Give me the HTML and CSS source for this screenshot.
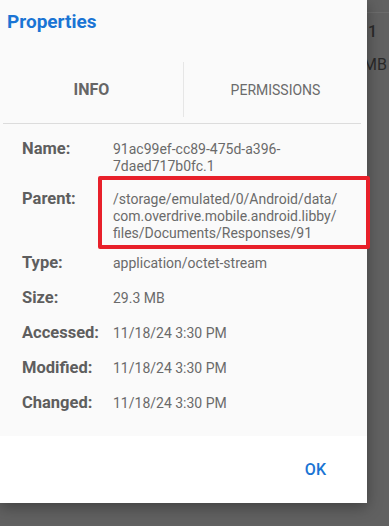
FILE: index.html
```html
<!DOCTYPE html>
<html lang="en">
<head>
    <meta charset="UTF-8">
    <meta name="viewport" content="width=device-width, initial-scale=1.0">
    <title>Properties</title>
    <link rel="stylesheet" href="styles.css">
</head>
<body>
    <div class="app">
        <div class="topbar"></div>
        <div class="file-name">b0fc.1</div>
        <div class="file-size">29.3 MB</div>
    </div>

    <div class="dialog">
        <div class="title">Properties</div>
        <div class="tabs">
            <div class="tab active">INFO</div>
            <div class="tab">PERMISSIONS</div>
        </div>
        <div class="sep"></div>
        <div class="info">
            <div class="row name">
                <div class="label">Name:</div>
                <div class="value">91ac99ef-cc89-475d-a396-<br>7daed717b0fc.1</div>
            </div>
            <div class="row parent">
                <div class="label">Parent:</div>
                <div class="value">/storage/emulated/0/Android/data/<br>com.overdrive.mobile.android.libby/<br>files/Documents/Responses/91</div>
            </div>
            <div class="row">
                <div class="label">Type:</div>
                <div class="value">application/octet-stream</div>
            </div>
            <div class="row">
                <div class="label">Size:</div>
                <div class="value">29.3 MB</div>
            </div>
            <div class="row">
                <div class="label">Accessed:</div>
                <div class="value">11/18/24 3:30 PM</div>
            </div>
            <div class="row">
                <div class="label">Modified:</div>
                <div class="value">11/18/24 3:30 PM</div>
            </div>
            <div class="row">
                <div class="label">Changed:</div>
                <div class="value">11/18/24 3:30 PM</div>
            </div>
        </div>
        <div class="footer">
            <div class="btn">OK</div>
        </div>
    </div>

    <div class="highlight"></div>
</body>
</html>
```

FILE: styles.css
```css
html, body {
    margin: 0;
    padding: 0;
}
body {
    position: relative;
    width: 389px;
    height: 526px;
    overflow: hidden;
    background-color: #616161;
    font-family: Roboto, "Liberation Sans", sans-serif;
}
.app {
    color: #2a2a2a;
    font-size: 16px;
}
.app .topbar {
    height: 12px;
    border-bottom: 1px solid #6c6c6c;
}
.app .file-name {
    margin-top: 10px;
    padding-right: 12px;
    text-align: right;
    font-weight: 500;
    line-height: 18px;
}
.app .file-size {
    margin-top: 15px;
    padding-right: 2px;
    text-align: right;
    line-height: 18px;
}
.dialog {
    position: absolute;
    top: 0;
    left: 0;
    width: 367px;
    height: 503px;
    display: flex;
    flex-direction: column;
    background-color: #fafafa;
    box-shadow: 0 4px 14px rgba(0, 0, 0, 0.35);
}
.dialog .title {
    height: 56px;
    box-sizing: border-box;
    padding: 10px 0 0 7px;
    font-size: 19px;
    line-height: 24px;
    font-weight: bold;
    color: #1a74d4;
}
.dialog .tabs {
    display: flex;
    height: 67px;
}
.dialog .tab {
    flex: 1;
    display: flex;
    align-items: center;
    justify-content: center;
    margin: 6px 0;
    font-size: 14px;
    color: #6b6b6b;
}
.dialog .tab + .tab {
    border-left: 1px solid #e6e6e6;
}
.dialog .tab.active {
    font-size: 16px;
    font-weight: bold;
    color: #666;
}
.dialog .sep {
    height: 1px;
    margin: 0 6px 0 3px;
    background-color: #dcdcdc;
}
.dialog .info {
    flex: 1;
    padding: 8px 0 0 22px;
}
.dialog .row {
    display: flex;
    align-items: baseline;
    padding: 7px 0 8px;
}
.dialog .row.name {
    padding-bottom: 7px;
}
.dialog .row.parent {
    padding-bottom: 4px;
}
.dialog .label {
    width: 91px;
    flex-shrink: 0;
    font-size: 16.5px;
    line-height: 20px;
    font-weight: bold;
    color: #5e5e5e;
}
.dialog .value {
    font-size: 14px;
    line-height: 17px;
    color: #6a6a6a;
}
.dialog .footer {
    height: 67px;
    display: flex;
    align-items: center;
    justify-content: flex-end;
    padding-right: 41px;
    background-color: #fff;
}
.dialog .btn {
    font-size: 16px;
    font-weight: 500;
    color: #1a74d4;
    cursor: pointer;
}
.highlight {
    position: absolute;
    left: 98px;
    top: 176px;
    width: 264px;
    height: 65px;
    border: 4px solid #e8202a;
    border-radius: 2px;
}
```
